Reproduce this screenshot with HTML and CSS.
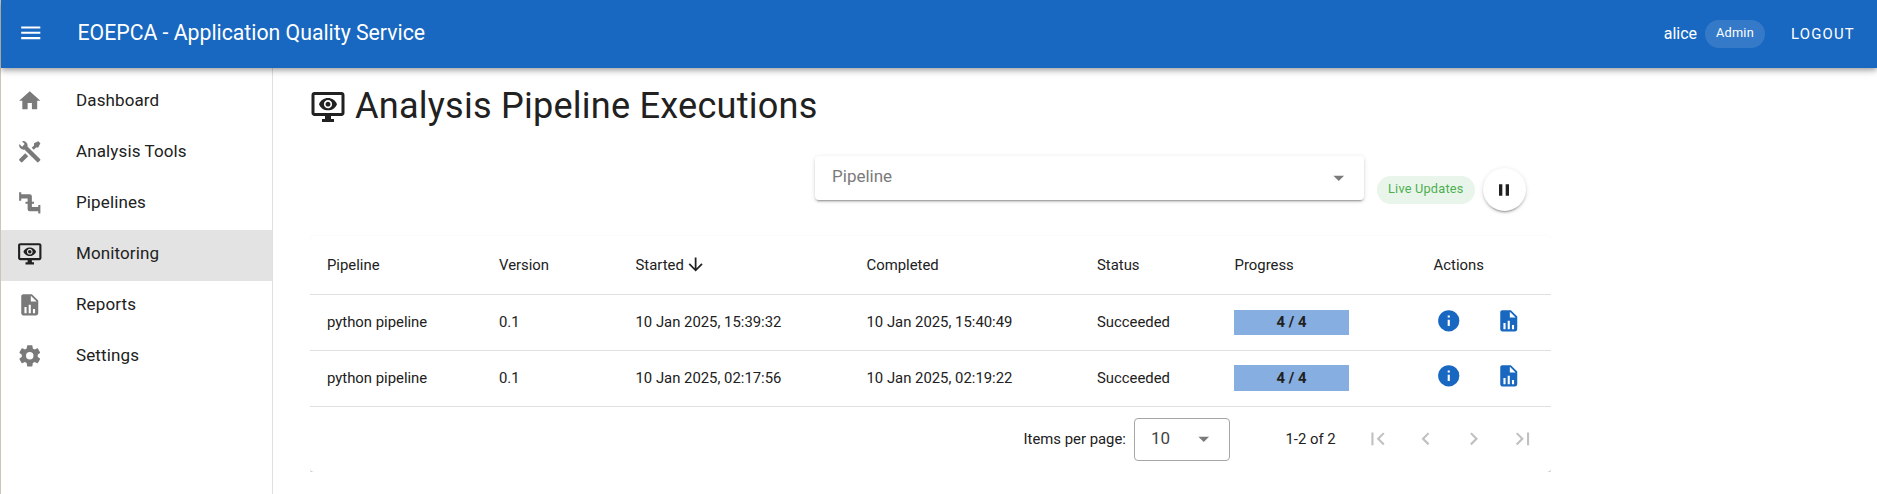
FILE: index.html
```html
<!DOCTYPE html>
<html lang="en">
<head>
<meta charset="utf-8">
<title>EOEPCA - Application Quality Service</title>
<link rel="stylesheet" href="styles.css">
</head>
<body>
<svg class="defs" aria-hidden="true">
<symbol id="menu" viewBox="0 0 24 24"><path d="M3,6H21V8H3V6M3,11H21V13H3V11M3,16H21V18H3V16Z"/></symbol>
<symbol id="home" viewBox="0 0 24 24"><path d="M10,20V14H14V20H19V12H22L12,3L2,12H5V20H10Z"/></symbol>
<symbol id="tools" viewBox="0 0 24 24"><path d="M21.71 20.29L20.29 21.71A1 1 0 0 1 18.88 21.71L7 9.85A3.81 3.81 0 0 1 6 10A4 4 0 0 1 2.22 4.7L4.76 7.24L5.29 6.71L6.71 5.29L7.24 4.76L4.7 2.22A4 4 0 0 1 10 6A3.81 3.81 0 0 1 9.85 7L21.71 18.88A1 1 0 0 1 21.71 20.29M2.29 18.88A1 1 0 0 0 2.29 20.29L3.71 21.71A1 1 0 0 0 5.12 21.71L10.59 16.25L7.76 13.42M20 2L16 4V6L13.83 8.17L15.83 10.17L18 8H20L22 4Z"/></symbol>
<symbol id="pipe" viewBox="0 0 24 24"><path d="M22,14H20V16H14V13H16V11H14V6A2,2 0 0,0 12,4H4V2H2V10H4V8H10V11H8V13H10V18A2,2 0 0,0 12,20H20V22H22"/></symbol>
<symbol id="monitor" viewBox="0 0 24 24"><path d="M3 4V16H21V4H3M3 2H21C22.1 2 23 2.89 23 4V16C23 16.53 22.79 17.04 22.41 17.41C22.04 17.79 21.53 18 21 18H14V20H16V22H8V20H10V18H3C2.47 18 1.96 17.79 1.59 17.41C1.21 17.04 1 16.53 1 16V4C1 2.89 1.89 2 3 2M10.84 8.93C11.15 8.63 11.57 8.45 12 8.45C12.43 8.46 12.85 8.63 13.16 8.94C13.46 9.24 13.64 9.66 13.64 10.09C13.64 10.53 13.46 10.94 13.16 11.25C12.85 11.56 12.43 11.73 12 11.73C11.57 11.73 11.15 11.55 10.84 11.25C10.54 10.94 10.36 10.53 10.36 10.09C10.36 9.66 10.54 9.24 10.84 8.93M10.07 12C10.58 12.53 11.28 12.82 12 12.82C12.72 12.82 13.42 12.53 13.93 12C14.44 11.5 14.73 10.81 14.73 10.09C14.73 9.37 14.44 8.67 13.93 8.16C13.42 7.65 12.72 7.36 12 7.36C11.28 7.36 10.58 7.65 10.07 8.16C9.56 8.67 9.27 9.37 9.27 10.09C9.27 10.81 9.56 11.5 10.07 12M6 10.09C6.94 7.7 9.27 6 12 6C14.73 6 17.06 7.7 18 10.09C17.06 12.5 14.73 14.18 12 14.18C9.27 14.18 6.94 12.5 6 10.09Z"/></symbol>
<symbol id="report" viewBox="0 0 24 24"><path d="M13,9H18.5L13,3.5V9M6,2H14L20,8V20A2,2 0 0,1 18,22H6C4.89,22 4,21.1 4,20V4C4,2.89 4.89,2 6,2M7,20H9V14H7V20M11,20H13V12H11V20M15,20H17V16H15V20Z"/></symbol>
<symbol id="cog" viewBox="0 0 24 24"><path d="M12,15.5A3.5,3.5 0 0,1 8.5,12A3.5,3.5 0 0,1 12,8.5A3.5,3.5 0 0,1 15.5,12A3.5,3.5 0 0,1 12,15.5M19.43,12.97C19.47,12.65 19.5,12.33 19.5,12C19.5,11.67 19.47,11.34 19.43,11L21.54,9.37C21.73,9.22 21.78,8.95 21.66,8.73L19.66,5.27C19.54,5.05 19.27,4.96 19.05,5.05L16.56,6.05C16.04,5.66 15.5,5.32 14.87,5.07L14.5,2.42C14.46,2.18 14.25,2 14,2H10C9.75,2 9.54,2.18 9.5,2.42L9.13,5.07C8.5,5.32 7.96,5.66 7.44,6.05L4.95,5.05C4.73,4.96 4.46,5.05 4.34,5.27L2.34,8.73C2.21,8.95 2.27,9.22 2.46,9.37L4.57,11C4.53,11.34 4.5,11.67 4.5,12C4.5,12.33 4.53,12.65 4.57,12.97L2.46,14.63C2.27,14.78 2.21,15.05 2.34,15.27L4.34,18.73C4.46,18.95 4.73,19.03 4.95,18.95L7.44,17.94C7.96,18.34 8.5,18.68 9.13,18.93L9.5,21.58C9.54,21.82 9.75,22 10,22H14C14.25,22 14.46,21.82 14.5,21.58L14.87,18.93C15.5,18.67 16.04,18.34 16.56,17.94L19.05,18.95C19.27,19.03 19.54,18.95 19.66,18.73L21.66,15.27C21.78,15.05 21.73,14.78 21.54,14.63L19.43,12.97Z"/></symbol>
<symbol id="down" viewBox="0 0 24 24"><path d="M11,4H13V16L18.5,10.5L19.92,11.92L12,19.84L4.08,11.92L5.5,10.5L11,16V4Z"/></symbol>
<symbol id="info" viewBox="0 0 24 24"><path d="M13,9H11V7H13M13,17H11V11H13M12,2A10,10 0 0,0 2,12A10,10 0 0,0 12,22A10,10 0 0,0 22,12A10,10 0 0,0 12,2Z"/></symbol>
<symbol id="caret" viewBox="0 0 24 24"><path d="M7,10L12,15L17,10H7Z"/></symbol>
<symbol id="first" viewBox="0 0 24 24"><path d="M18.41,16.59L13.82,12L18.41,7.41L17,6L11,12L17,18L18.41,16.59M6,6H8V18H6V6Z"/></symbol>
<symbol id="prev" viewBox="0 0 24 24"><path d="M15.41,16.58L10.83,12L15.41,7.41L14,6L8,12L14,18L15.41,16.58Z"/></symbol>
<symbol id="next" viewBox="0 0 24 24"><path d="M8.59,16.58L13.17,12L8.59,7.41L10,6L16,12L10,18L8.59,16.58Z"/></symbol>
<symbol id="last" viewBox="0 0 24 24"><path d="M5.59,7.41L10.18,12L5.59,16.59L7,18L13,12L7,6L5.59,7.41M16,6H18V18H16V6Z"/></symbol>
<symbol id="pause" viewBox="0 0 24 24"><path d="M14,19H18V5H14M6,19H10V5H6V19Z"/></symbol>
</svg>
<div class="app">
  <header class="bar">
    <svg class="icon"><use href="#menu"/></svg>
    <span class="bar-title">EOEPCA - Application Quality Service</span>
    <span class="user">alice</span>
    <span class="chip chip-admin">Admin</span>
    <span class="logout">LOGOUT</span>
  </header>
  <div class="body">
    <nav class="side">
      <a class="item"><svg class="icon"><use href="#home"/></svg><span>Dashboard</span></a>
      <a class="item"><svg class="icon"><use href="#tools"/></svg><span>Analysis Tools</span></a>
      <a class="item"><svg class="icon"><use href="#pipe"/></svg><span>Pipelines</span></a>
      <a class="item active"><svg class="icon"><use href="#monitor"/></svg><span>Monitoring</span></a>
      <a class="item"><svg class="icon"><use href="#report"/></svg><span>Reports</span></a>
      <a class="item"><svg class="icon"><use href="#cog"/></svg><span>Settings</span></a>
    </nav>
    <main class="main">
      <h1 class="heading"><svg class="heading-icon"><use href="#monitor"/></svg><span>Analysis Pipeline Executions</span></h1>
      <div class="filters">
        <div class="select"><span>Pipeline</span><svg class="icon"><use href="#caret"/></svg></div>
        <span class="chip chip-live">Live Updates</span>
        <button class="pause"><svg class="pause-icon"><use href="#pause"/></svg></button>
      </div>
      <div class="clip">
      <section class="card">
        <div class="row head"><span>Pipeline</span><span>Version</span><span class="sorted">Started<svg class="sort"><use href="#down"/></svg></span><span>Completed</span><span>Status</span><span>Progress</span><span>Actions</span></div>
        <div class="row"><span>python pipeline</span><span>0.1</span><span>10 Jan 2025, 15:39:32</span><span>10 Jan 2025, 15:40:49</span><span>Succeeded</span><span class="meter"><b class="progress">4 / 4</b></span><span class="actions"><svg class="icon"><use href="#info"/></svg><svg class="icon"><use href="#report"/></svg></span></div>
        <div class="row last"><span>python pipeline</span><span>0.1</span><span>10 Jan 2025, 02:17:56</span><span>10 Jan 2025, 02:19:22</span><span>Succeeded</span><span class="meter"><b class="progress">4 / 4</b></span><span class="actions"><svg class="icon"><use href="#info"/></svg><svg class="icon"><use href="#report"/></svg></span></div>
        <footer class="foot">
          <span>Items per page:</span>
          <div class="size"><span>10</span><svg class="icon"><use href="#caret"/></svg></div>
          <span class="range">1-2 of 2</span>
          <div class="pager"><svg class="icon"><use href="#first"/></svg><svg class="icon"><use href="#prev"/></svg><svg class="icon"><use href="#next"/></svg><svg class="icon"><use href="#last"/></svg></div>
        </footer>
      </section>
      </div>
    </main>
  </div>
</div>
</body>
</html>
```
FILE: styles.css
```css
* { box-sizing: border-box; }
body { margin: 0; background: #fff; color: #212121; font-family: Roboto, sans-serif; font-size: 17px; overflow: hidden; }
.defs { display: none; }
svg { fill: currentColor; display: block; flex: none; }
.icon { width: 25.5px; height: 25.5px; }
.app { height: 494px; border-left: 1px solid #cbc5bd; display: flex; flex-direction: column; }
.bar { position: relative; z-index: 1; height: 68px; flex: none; display: flex; align-items: center; padding: 0 22px 0 17px; background: #1867c0; color: #fff;
  box-shadow: 0 2px 4px -1px rgba(0,0,0,.2), 0 4px 5px rgba(0,0,0,.14), 0 1px 10px rgba(0,0,0,.12); }
.bar > .icon { margin-bottom: 3px; }
.bar-title { margin: 0 0 3px 34px; font-size: 21.25px; letter-spacing: -.01px; flex: 1; }
.user { font-size: 16px; margin: 0 8px 1px 0; }
.chip { display: flex; align-items: center; height: 28px; border-radius: 14px; padding: 0 11px 3px; font-size: 12.75px; letter-spacing: .2px; white-space: nowrap; }
.chip-admin { background: rgba(255,255,255,.13); }
.logout { margin-left: 26px; font-size: 14.875px; letter-spacing: 1.25px; }
.body { flex: 1; display: flex; }
.side { width: 272px; flex: none; border-right: 1px solid #e0e0e0; padding-top: 9px; }
.item { display: flex; align-items: center; height: 51px; padding: 0 0 3px 16.25px; letter-spacing: .12px; color: #212121; }
.item .icon { color: #7a7a7a; margin-right: 33.25px; }
.item.active { background: #e3e3e3; }
.item.active .icon { color: #212121; }
.item span { padding-bottom: 2px; }
.main { padding: 0 0 0 37px; width: 1278px; }
.heading { margin: 0; height: 75px; display: flex; align-items: center; font-size: 36.125px; font-weight: 400; letter-spacing: .22px; }
.heading-icon { width: 36px; height: 36px; margin: 3px 9px 0 0; }
.filters { display: flex; height: 90px; justify-content: flex-end; align-items: flex-start; padding: 13px 25.5px 0 0; }
.select { width: 549px; height: 44px; padding: 0 13px 1px 17px; display: flex; align-items: center; justify-content: space-between; border-radius: 4px; color: #7a7a7a; box-shadow: 0 3px 1px -2px rgba(0,0,0,.2), 0 2px 2px rgba(0,0,0,.14), 0 1px 5px rgba(0,0,0,.12); }
.select span { padding-bottom: 3px; }
.chip-live { margin: 20px 8px 0 13px; color: #4caf50; background: #e9f5ea; }
.pause { width: 43px; height: 43px; border: 0; border-radius: 50%; margin-top: 12px; padding: 0; display: flex; align-items: center; justify-content: center; background: #fff; color: #212121; box-shadow: 0 3px 1px -2px rgba(0,0,0,.2), 0 2px 2px rgba(0,0,0,.14), 0 1px 5px rgba(0,0,0,.12); }
.pause-icon { width: 20px; height: 20px; }
.clip { overflow: hidden; padding-top: 3px; }
.card { height: 236px; border-radius: 4px; box-shadow: 0 2px 1px -1px rgba(0,0,0,.2), 0 1px 1px rgba(0,0,0,.14), 0 1px 3px rgba(0,0,0,.12); font-size: 14.875px; }
.row { display: grid; grid-template-columns: 172px 136.5px 231px 230.5px 137px 199px 1fr; height: 56px; align-items: center; border-bottom: 1px solid #e0e0e0; }
.row.head { height: 59px; }
.row > span { padding: 0 0 2px 17px; }
.row.head > span { padding-bottom: 0; }
.row.head > span:nth-child(n+6) { padding-left: 17.6px; }
.row > .meter { padding-bottom: 0; }
.sorted { display: flex; align-items: center; }
.sort { width: 21.25px; height: 21.25px; margin-left: 1px; }
.progress { display: flex; align-items: center; justify-content: center; width: 115px; height: 25px; padding-bottom: 1px; background: #86aee0; }
.last .progress { height: 26px; margin-top: -1px; padding-bottom: 0; }
.row > .actions { display: flex; gap: 34px; padding: 0 0 3px 20px; color: #1867c0; }
.row.last > .actions { padding-bottom: 5px; }
.foot { display: flex; align-items: center; justify-content: flex-end; height: 65px; padding-right: 16px; }
.foot > span { padding-bottom: 2px; }
.size { width: 96px; height: 43px; margin-left: 8px; padding: 0 12px 1px 16px; border: 1px solid #a6a6a6; border-radius: 4px; display: flex; align-items: center; justify-content: space-between; font-size: 17px; color: #444; }
.size span { padding-bottom: 3px; }
.size .icon { color: #7a7a7a; }
.range { margin-left: 55.5px; }
.pager { display: flex; gap: 22.8px; margin: 0 0 2px 29px; color: #c0c0c0; }
```
